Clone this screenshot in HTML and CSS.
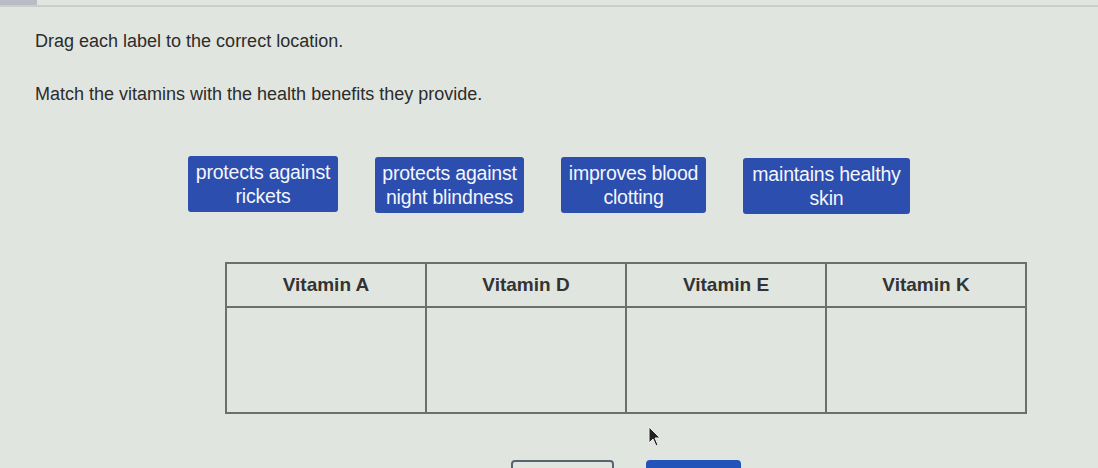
FILE: index.html
```html
<!DOCTYPE html>
<html lang="en">
<head>
    <meta charset="UTF-8">
    <title>Vitamins - Drag and Drop</title>
    <link rel="stylesheet" href="styles.css">
</head>
<body>

<div class="top-bar">
    <div class="top-tab"></div>
</div>

<div class="question">
    <p class="instruction">Drag each label to the correct location.</p>
    <p class="prompt">Match the vitamins with the health benefits they provide.</p>

    <!-- Draggable labels -->
    <div class="labels">
        <div class="label l1">protects against<br>rickets</div>
        <div class="label l2">protects against<br>night blindness</div>
        <div class="label l3">improves blood<br>clotting</div>
        <div class="label l4">maintains healthy<br>skin</div>
    </div>

    <!-- Drop targets -->
    <table class="targets">
        <tr>
            <th>Vitamin A</th>
            <th>Vitamin D</th>
            <th>Vitamin E</th>
            <th>Vitamin K</th>
        </tr>
        <tr>
            <td></td>
            <td></td>
            <td></td>
            <td></td>
        </tr>
    </table>

    <div class="actions">
        <button class="btn-outline"></button>
        <button class="btn-primary"></button>
    </div>
</div>

<svg class="cursor" width="14" height="22" viewBox="0 0 14 22">
    <path d="M1 1 L1 17 L5 13 L8 20 L10 19 L7 12 L12 12 Z" fill="#222" stroke="#eee" stroke-width="1"/>
</svg>

</body>
</html>
```

FILE: styles.css
```css
body {
    margin: 0;
    background-color: #e1e5df;
    font-family: "Liberation Sans", Arial, sans-serif;
    color: #2c2c2c;
    position: relative;
    height: 468px;
    overflow: hidden;
}

.top-bar {
    height: 5px;
    border-bottom: 2px solid #c9cdcc;
}

.top-tab {
    width: 37px;
    height: 5px;
    background-color: #b9bcc6;
}

.question {
    padding-top: 24px;
}

.instruction,
.prompt {
    margin: 0;
    padding-left: 35px;
    font-size: 18px;
    line-height: 20px;
}

.prompt {
    margin-top: 33px;
}

.labels {
    display: flex;
    gap: 37px;
    margin: 52px 0 0 188px;
    align-items: flex-start;
}

.label {
    background-color: #2c4eae;
    color: #f4f6fb;
    font-size: 19.5px;
    line-height: 24px;
    text-align: center;
    padding: 4px 0;
    border-radius: 3px;
    white-space: nowrap;
    letter-spacing: -0.2px;
}

.l1 { width: 150px; }
.l2 { width: 149px; margin-top: 1px; }
.l3 { width: 145px; margin-top: 1px; }
.l4 { width: 167px; margin-top: 2px; }

.targets {
    margin: 48px 0 0 225px;
    width: 802px;
    border-collapse: collapse;
}

.targets th,
.targets td {
    border: 2px solid #6e6e6e;
    width: 25%;
}

.targets th {
    height: 40px;
    font-size: 19px;
    font-weight: bold;
    color: #333;
}

.targets td {
    height: 102px;
}

.actions {
    display: flex;
    gap: 32px;
    margin: 46px 0 0 511px;
}

.btn-outline {
    width: 103px;
    height: 20px;
    border: 2px solid #5a6470;
    border-radius: 4px;
    background: transparent;
}

.btn-primary {
    width: 95px;
    height: 20px;
    border: none;
    border-radius: 4px;
    background-color: #2253b8;
}

.cursor {
    position: absolute;
    left: 648px;
    top: 426px;
}
```
